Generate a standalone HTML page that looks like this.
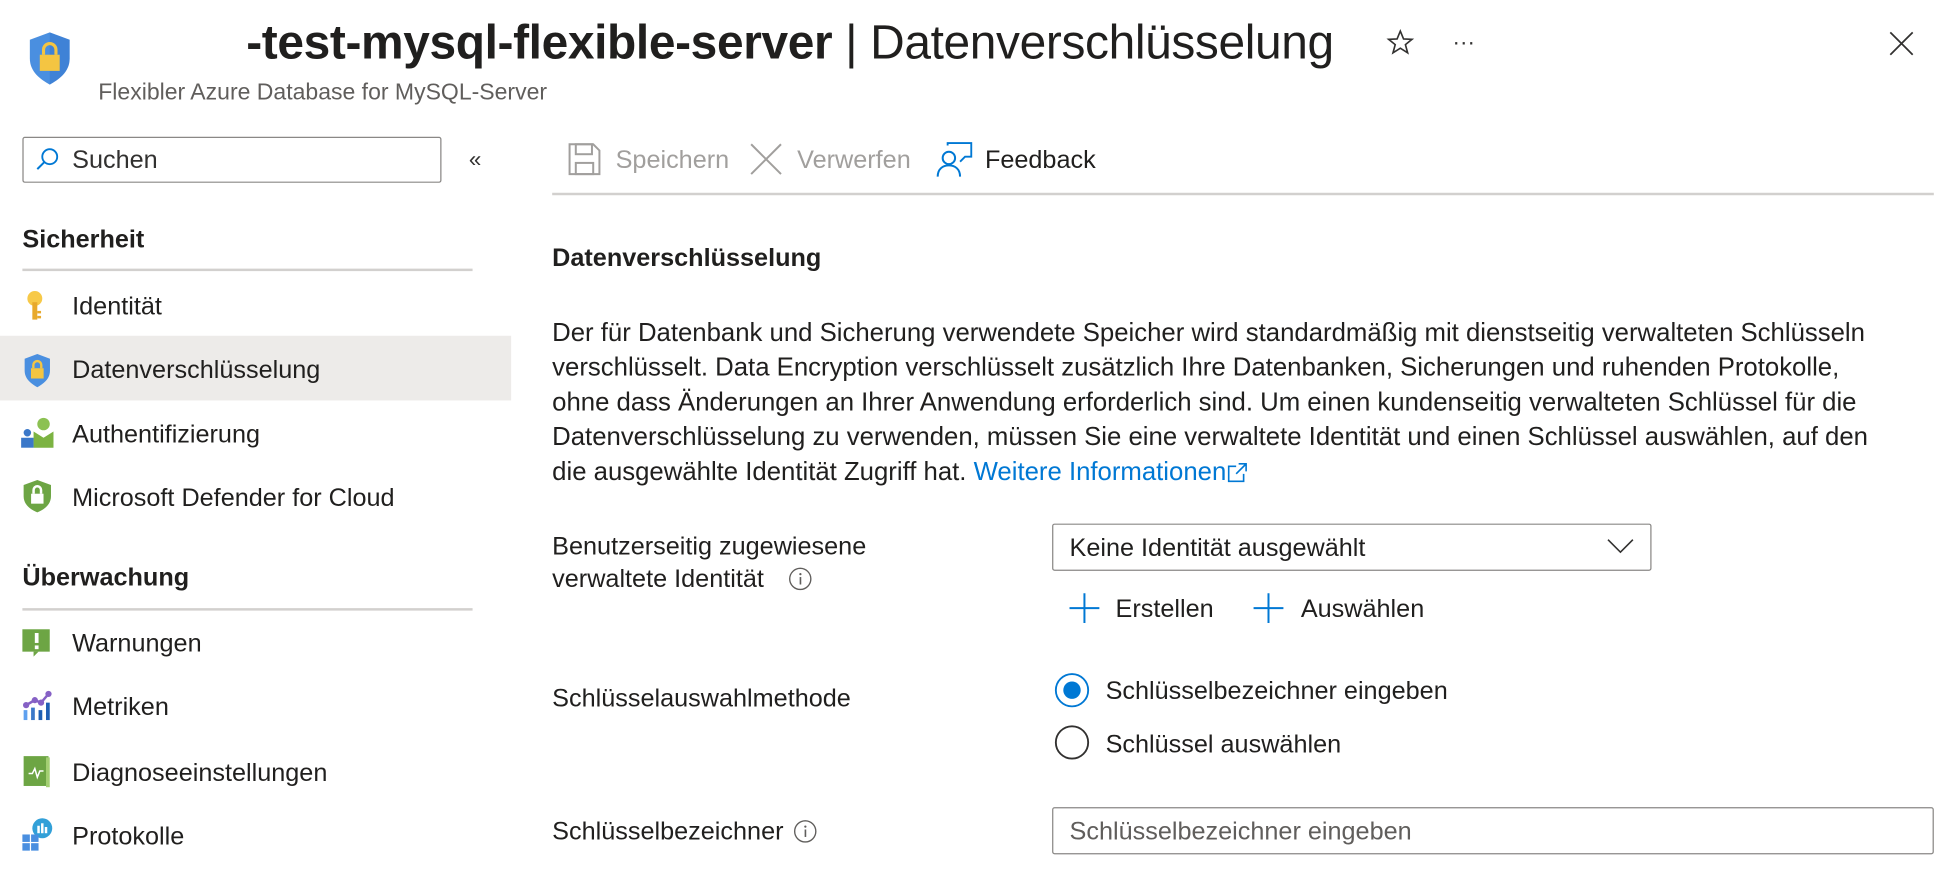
<!DOCTYPE html>
<html><head><meta charset="utf-8"><style>
html,body{margin:0;padding:0;background:#fff;width:1950px;height:870px;overflow:hidden}
#w{position:absolute;left:0;top:0;width:1568px;height:700px;transform:scale(1.24362);transform-origin:0 0;font-family:"Liberation Sans",sans-serif;color:#201f1e}
.a{position:absolute;white-space:nowrap;line-height:28px;height:28px}
.t{font-size:20.3px}
.g{color:#a19f9d}
svg{position:absolute;overflow:visible}
</style></head><body><div id="w">
<svg style="left:22px;top:25px" width="36" height="44" viewBox="0 0 36 44"><path d="M18 1 L34 7 V22 C34 33 25 39 18 43 C11 39 2 33 2 22 V7 Z" fill="#4a8fe0"/><path d="M18 1 L34 7 V22 C34 33 25 39 18 43Z" fill="#2f6fc9" opacity=".4"/><rect x="10" y="19" width="16" height="13" fill="#f4c542"/><path d="M13 19v-4a5 5 0 0 1 10 0v4" fill="none" stroke="#f4c542" stroke-width="2.5"/></svg>
<div class="a" style="left:198px;top:15px;height:40px;line-height:40px;font-size:38.5px;letter-spacing:-.3px"><b>-test-mysql-flexible-server</b> | Datenverschlüsselung</div>
<div class="a" style="left:79px;top:60px;font-size:18.5px;color:#605e5c">Flexibler Azure Database for MySQL-Server</div>
<svg style="left:1115px;top:23px" width="22" height="22" viewBox="0 0 22 22"><path d="M11 2 L13.6 8.3 L20.4 8.6 L15.1 12.9 L16.9 19.5 L11 15.8 L5.1 19.5 L6.9 12.9 L1.6 8.6 L8.4 8.3 Z" fill="none" stroke="#323130" stroke-width="1.3"/></svg>
<div class="a" style="left:1168px;top:20px;font-size:18px;color:#323130">···</div>
<svg style="left:1519px;top:25px" width="20" height="20"><path d="M1 1L19 19M19 1L1 19" stroke="#323130" stroke-width="1.4"/></svg>
<div style="position:absolute;left:18px;top:110px;width:335px;height:35px;border:1px solid #8a8886;border-radius:2px"></div>
<svg style="left:28px;top:118px" width="20" height="20"><circle cx="12" cy="8" r="6" fill="none" stroke="#0078d4" stroke-width="1.5"/><path d="M8 12L2 18" stroke="#0078d4" stroke-width="1.6"/></svg>
<div class="a t" style="left:58px;top:115px;color:#323130">Suchen</div>
<div class="a" style="left:377px;top:114px;font-size:18px;color:#323130">«</div>
<div class="a t" style="left:18px;top:179px;font-weight:bold">Sicherheit</div>
<div style="position:absolute;left:18px;top:216px;width:362px;height:2px;background:#d2d0ce"></div>
<div style="position:absolute;left:0;top:270px;width:411px;height:52px;background:#edebe9"></div>
<svg style="left:20px;top:233px" width="20" height="26"><circle cx="8" cy="7" r="6" fill="#f7c948"/><rect x="6" y="10" width="4" height="14" fill="#e8a92c"/><rect x="10" y="17" width="3" height="2" fill="#e8a92c"/><rect x="10" y="21" width="3" height="2" fill="#e8a92c"/></svg>
<div class="a t" style="left:58px;top:233px">Identität</div>
<svg style="left:18px;top:284px" width="24" height="28" viewBox="0 0 36 44"><path d="M18 1 L34 7 V22 C34 33 25 39 18 43 C11 39 2 33 2 22 V7 Z" fill="#4a8fe0"/><rect x="10" y="19" width="16" height="13" fill="#f4c542"/><path d="M13 19v-4a5 5 0 0 1 10 0v4" fill="none" stroke="#f4c542" stroke-width="3"/></svg>
<div class="a t" style="left:58px;top:284px">Datenverschlüsselung</div>
<svg style="left:17px;top:336px" width="26" height="24"><circle cx="18" cy="5" r="5" fill="#8cc152"/><path d="M10 24V11L18 16L26 11V24Z" fill="#7cb342"/><circle cx="5" cy="12" r="3" fill="#3b78c9"/><rect x="0" y="16" width="10" height="8" fill="#3b78c9"/></svg>
<div class="a t" style="left:58px;top:336px">Authentifizierung</div>
<svg style="left:19px;top:386px" width="22" height="26" viewBox="0 0 22 26"><path d="M11 0L22 4V13C22 20 16 24 11 26C6 24 0 20 0 13V4Z" fill="#6da544"/><rect x="6" y="11" width="10" height="8" fill="#fff"/><path d="M8 11V8a3 3 0 0 1 6 0v3" stroke="#fff" stroke-width="2" fill="none"/></svg>
<div class="a t" style="left:58px;top:387px">Microsoft Defender for Cloud</div>
<div class="a t" style="left:18px;top:451px;font-weight:bold">Überwachung</div>
<div style="position:absolute;left:18px;top:489px;width:362px;height:2px;background:#d2d0ce"></div>
<svg style="left:18px;top:506px" width="24" height="22"><rect width="22" height="18" fill="#6da544"/><path d="M9 18V22L13 18Z" fill="#6da544"/><rect x="10" y="3" width="3" height="8" fill="#fff"/><rect x="10" y="13" width="3" height="3" fill="#fff"/></svg>
<div class="a t" style="left:58px;top:504px">Warnungen</div>
<svg style="left:18px;top:555px" width="24" height="26"><path d="M3 12L10 8L15 10L21 3" stroke="#8661c5" stroke-width="2" fill="none"/><circle cx="3" cy="12" r="2.5" fill="#8661c5"/><circle cx="10" cy="8" r="2.5" fill="#8661c5"/><circle cx="15" cy="10" r="2.5" fill="#8661c5"/><circle cx="21" cy="3" r="2.5" fill="#8661c5"/><rect x="1" y="16" width="3" height="8" fill="#5ea0ef"/><rect x="7" y="14" width="3" height="10" fill="#3b78c9"/><rect x="13" y="16" width="3" height="8" fill="#1f5fb4"/><rect x="19" y="10" width="3" height="14" fill="#1f5fb4"/></svg>
<div class="a t" style="left:58px;top:555px">Metriken</div>
<svg style="left:19px;top:608px" width="22" height="26"><rect width="20" height="24" fill="#6da544"/><rect x="18" y="1" width="3" height="24" fill="#a3cf73"/><path d="M4 14L7 14L9 10L11 17L13 12L16 12" stroke="#fff" stroke-width="1.2" fill="none"/></svg>
<div class="a t" style="left:58px;top:608px">Diagnoseeinstellungen</div>
<svg style="left:18px;top:658px" width="24" height="26"><circle cx="16" cy="8" r="8" fill="#32a0d8"/><rect x="12" y="6" width="2" height="6" fill="#fff"/><rect x="15" y="4" width="2" height="8" fill="#fff"/><rect x="18" y="7" width="2" height="5" fill="#fff"/><rect x="0" y="13" width="6" height="6" fill="#4a8fe0"/><rect x="7" y="13" width="6" height="6" fill="#4a8fe0"/><rect x="0" y="20" width="6" height="6" fill="#4a8fe0"/><rect x="7" y="20" width="6" height="6" fill="#4a8fe0"/></svg>
<div class="a t" style="left:58px;top:659px">Protokolle</div>
<svg style="left:457px;top:115px" width="26" height="26"><path d="M1 1H20L25 6V25H1Z" fill="none" stroke="#a19f9d" stroke-width="1.6"/><rect x="6" y="1" width="13" height="8" fill="none" stroke="#a19f9d" stroke-width="1.6"/><rect x="6" y="16" width="14" height="9" fill="none" stroke="#a19f9d" stroke-width="1.6"/></svg>
<div class="a t g" style="left:495px;top:115px">Speichern</div>
<svg style="left:603px;top:115px" width="26" height="26"><path d="M1 1L25 25M25 1L1 25" stroke="#a19f9d" stroke-width="1.6"/></svg>
<div class="a t g" style="left:641px;top:115px">Verwerfen</div>
<svg style="left:753px;top:114px" width="28" height="28"><path d="M9 3V1H28V12H23L19 16" fill="none" stroke="#0078d4" stroke-width="1.5"/><circle cx="10" cy="13" r="5" fill="none" stroke="#0078d4" stroke-width="1.6"/><path d="M1 28C1 22 5 19 10 19C15 19 19 22 19 28" fill="none" stroke="#0078d4" stroke-width="1.6"/></svg>
<div class="a t" style="left:792px;top:115px">Feedback</div>
<div style="position:absolute;left:444px;top:155px;width:1111px;height:2px;background:#d2d0ce"></div>
<div class="a t" style="left:444px;top:194px;font-weight:bold">Datenverschlüsselung</div>
<div style="position:absolute;left:444px;top:254px;line-height:28px;white-space:nowrap;font-size:20.7px">Der für Datenbank und Sicherung verwendete Speicher wird standardmäßig mit dienstseitig verwalteten Schlüsseln<br>verschlüsselt. Data Encryption verschlüsselt zusätzlich Ihre Datenbanken, Sicherungen und ruhenden Protokolle,<br>ohne dass Änderungen an Ihrer Anwendung erforderlich sind. Um einen kundenseitig verwalteten Schlüssel für die<br>Datenverschlüsselung zu verwenden, müssen Sie eine verwaltete Identität und einen Schlüssel auswählen, auf den<br>die ausgewählte Identität Zugriff hat. <span style="color:#0078d4">Weitere Informationen<svg style="position:relative;left:1px;top:2px" width="16" height="16"><path d="M7 3H1V15H13V9M9 1H15V7M15 1L7 9" fill="none" stroke="#0078d4" stroke-width="1.3"/></svg></span></div>
<div class="t" style="position:absolute;left:444px;top:427px;line-height:26px;white-space:nowrap">Benutzerseitig zugewiesene<br>verwaltete Identität</div>
<svg style="left:634px;top:456px" width="19" height="19"><circle cx="9.5" cy="9.5" r="8.5" fill="none" stroke="#605e5c" stroke-width="1.1"/><rect x="9" y="8" width="1.3" height="6" fill="#605e5c"/><circle cx="9.6" cy="5.7" r=".9" fill="#605e5c"/></svg>
<div style="position:absolute;left:846px;top:421px;width:480px;height:36px;border:1px solid #8a8886;border-radius:2px"></div>
<div class="a t" style="left:860px;top:427px">Keine Identität ausgewählt</div>
<svg style="left:1292px;top:433px" width="22" height="12"><path d="M1 1L11 11L21 1" fill="none" stroke="#323130" stroke-width="1.3"/></svg>
<svg style="left:860px;top:477px" width="24" height="24"><path d="M12 0V24M0 12H24" stroke="#0078d4" stroke-width="1.6"/></svg>
<div class="a t" style="left:897px;top:476px">Erstellen</div>
<svg style="left:1008px;top:477px" width="24" height="24"><path d="M12 0V24M0 12H24" stroke="#0078d4" stroke-width="1.6"/></svg>
<div class="a t" style="left:1046px;top:476px">Auswählen</div>
<div class="a t" style="left:444px;top:548px">Schlüsselauswahlmethode</div>
<svg style="left:847px;top:541px" width="30" height="30"><circle cx="15" cy="14" r="13" fill="none" stroke="#0078d4" stroke-width="1.5"/><circle cx="15" cy="14" r="7" fill="#0078d4"/></svg>
<div class="a t" style="left:889px;top:542px">Schlüsselbezeichner eingeben</div>
<svg style="left:847px;top:583px" width="30" height="30"><circle cx="15" cy="14" r="13" fill="none" stroke="#323130" stroke-width="1.5"/></svg>
<div class="a t" style="left:889px;top:585px">Schlüssel auswählen</div>
<div class="a t" style="left:444px;top:655px">Schlüsselbezeichner</div>
<svg style="left:638px;top:659px" width="19" height="19"><circle cx="9.5" cy="9.5" r="8.5" fill="none" stroke="#605e5c" stroke-width="1.1"/><rect x="9" y="8" width="1.3" height="6" fill="#605e5c"/><circle cx="9.6" cy="5.7" r=".9" fill="#605e5c"/></svg>
<div style="position:absolute;left:846px;top:649px;width:707px;height:36px;border:1px solid #8a8886;border-radius:2px"></div>
<div class="a t" style="left:860px;top:655px;color:#605e5c">Schlüsselbezeichner eingeben</div>
</div></body></html>
